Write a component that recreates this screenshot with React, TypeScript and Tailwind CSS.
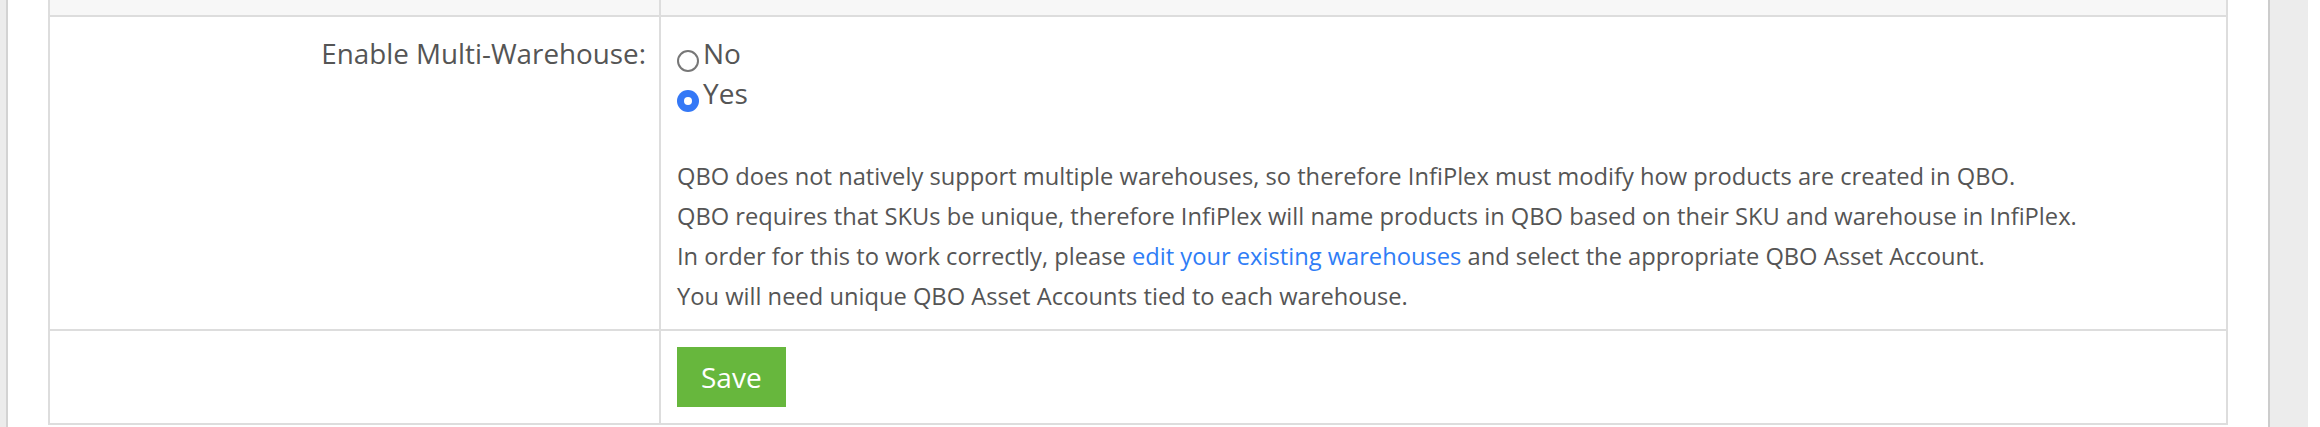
const Radio: React.FC<{ checked?: boolean; label: string }> = ({ checked, label }) => {
  return (
    <label className="flex items-start leading-[40px]">
      {checked ? (
        <span className="mt-[17px] mr-[4px] flex h-[22px] w-[22px] shrink-0 items-center justify-center rounded-full bg-[#3478f6]">
          <span className="h-[8px] w-[8px] rounded-full bg-white" />
        </span>
      ) : (
        <span className="mt-[17px] mr-[4px] h-[22px] w-[22px] shrink-0 rounded-full border-2 border-[#777777] bg-white" />
      )}
      <span>{label}</span>
    </label>
  );
};

const App: React.FC = () => {
  return (
    <div className="flex h-[427px] w-[2320px] overflow-hidden bg-white font-['Open_Sans',sans-serif] text-[#555555]">
      <div className="w-[6px] shrink-0 bg-[#ececec]" />
      <div className="w-[2264px] shrink-0 border-x-2 border-l-[#d3d3d3] border-r-[#cccccc] bg-white px-[40px]">
        <div className="border-x-2 border-b-2 border-[#dddddd]">
          <div className="flex h-[15px] bg-[#f7f7f7]">
            <div className="w-[611px] shrink-0 border-r-2 border-[#dddddd]" />
            <div className="flex-1" />
          </div>

          <div className="flex border-t-2 border-[#dddddd]">
            <div className="w-[611px] shrink-0 border-r-2 border-[#dddddd] pt-4 pr-[13px] text-right text-[27.8px] leading-[40px]">
              Enable Multi-Warehouse:
            </div>
            <div className="flex-1 pt-4 pb-[13px] pl-4">
              <div className="text-[28px]">
                <Radio label="No" />
                <Radio label="Yes" checked />
              </div>
              <div className="mt-[43px] text-[23.7px] leading-[40px]">
                <p>QBO does not natively support multiple warehouses, so therefore InfiPlex must modify how products are created in QBO.</p>
                <p>QBO requires that SKUs be unique, therefore InfiPlex will name products in QBO based on their SKU and warehouse in InfiPlex.</p>
                <p>
                  In order for this to work correctly, please{" "}
                  <a href="#" className="text-[#2f7df6]">edit your existing warehouses</a>{" "}
                  and select the appropriate QBO Asset Account.
                </p>
                <p>You will need unique QBO Asset Accounts tied to each warehouse.</p>
              </div>
            </div>
          </div>

          <div className="flex border-t-2 border-[#dddddd]">
            <div className="w-[611px] shrink-0 border-r-2 border-[#dddddd]" />
            <div className="flex-1 py-4 pl-4">
              <button className="h-[60px] bg-[#67b73d] px-6 text-[28px] leading-[60px] text-white">
                Save
              </button>
            </div>
          </div>
        </div>
      </div>
      <div className="w-[38px] shrink-0 bg-[#ececec]" />
      <div className="w-[12px] shrink-0 bg-white" />
    </div>
  );
};

export default App;
